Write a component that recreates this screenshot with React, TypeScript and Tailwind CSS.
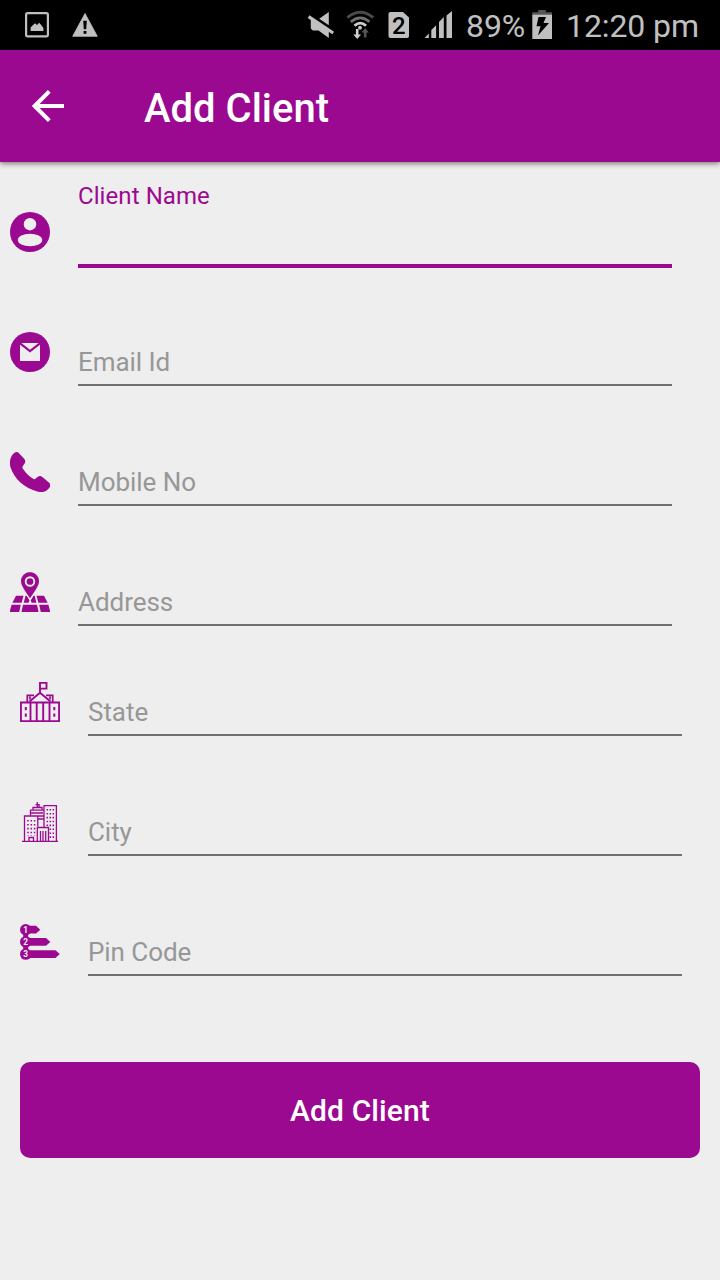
import type { ReactNode } from 'react';

const P = '#9c0991';

function StatusBar() {
  return (
    <div className="flex h-[50px] shrink-0 bg-black text-[#c0c0c0]">
      <svg className="ml-[25px] h-[50px] w-[24px]" viewBox="25 0 24 50" fill="none">
        <rect x="26.1" y="13.1" width="21.8" height="23.3" rx="1.6" stroke="currentColor" strokeWidth="2.2" />
        <path d="M30.600 31v-3.600l2.400-2.400 2-1.800 2 1.800 2.200-2.200 2 2.200 2.200 3v3z" fill="currentColor" />
      </svg>
      <svg className="ml-[23px] h-[50px] w-[26px]" viewBox="72 0 26 50">
        <path d="M85 13.500 97.300 36.300h-24.600z" fill="currentColor" stroke="currentColor" strokeWidth=".8" strokeLinejoin="round" />
        <path d="M83.200 20.800h3.600l-.6 8.400h-2.400zM83.600 31h2.800v2.800h-2.800z" fill="#000" />
      </svg>
      <svg className="ml-[209px] h-[50px] w-[28px]" viewBox="307 0 28 50" fill="currentColor">
        <path d="M319.200 18.700 328.800 12v13.200zM310.800 18l18 12.500V38l-10.300-7.500h-5.700l-2-2z" />
        <path d="M308.600 16.700 333.200 33" stroke="currentColor" strokeWidth="3.200" />
      </svg>
      <svg className="ml-[11px] h-[50px] w-[28px]" viewBox="346 0 28 50" fill="none">
        <path d="M347.300 17.600Q360.500 6.900 373.200 17.600" stroke="#4a4a4a" strokeWidth="3" />
        <path d="M350.800 21.800Q360.200 14 369.500 21.800" stroke="#707070" strokeWidth="2.800" />
        <path d="M354.500 25.700Q360.200 20.500 366 25.700" stroke="#d0d0d0" strokeWidth="2.800" />
        <circle cx="360" cy="27.800" r="2" fill="#c0c0c0" />
        <path d="M355.900 29h2.600v5.500h2.600l-3.900 4.500-3.900-4.500h2.600z" fill="#d0d0d0" />
        <path d="M363.900 37.500h2.600v-5h2.400l-3.700-4.500-3.700 4.500h2.400z" fill="#555" />
      </svg>
      <svg className="ml-[14px] h-[50px] w-[22px]" viewBox="388 0 22 50">
        <path d="M390.500 12h12.500l6 5.500V36q0 2-2 2h-16.500q-2 0-2-2V14q0-2 2-2z" fill="currentColor" />
        <text x="398.700" y="33.500" textAnchor="middle" fontFamily="Roboto, sans-serif" fontWeight="500" fontSize="24" fill="#000">2</text>
      </svg>
      <svg className="ml-[14px] h-[50px] w-[29px]" viewBox="424 0 29 50" fill="currentColor">
        <path d="M424.500 38l4.300-4.500V38zM431.300 38v-8l4.800-4.800V38zM439 38V22l4.800-5V38zM446.500 38V15.500L452 11v27z" />
      </svg>
      <span className="ml-[13px] w-[60px] whitespace-nowrap text-[32px] leading-[52px] tracking-[-0.1px]">89%</span>
      <svg className="ml-[6px] h-[50px] w-[21px]" viewBox="532 0 21 50">
        <path d="M532.300 14.500V12.300h5.900V10h7.600v2.300h6.200v2.200z" fill="#555" />
        <path d="M532.300 14.500H552V39h-19.700z" fill="currentColor" />
        <path d="M538.500 17h7.500l-2.500 6h5.500L538 35.500l2.500-9.300h-4z" fill="#000" />
      </svg>
      <span className="ml-[13px] whitespace-nowrap text-[32px] leading-[52px] tracking-[-0.1px]">12:20 pm</span>
    </div>
  );
}

function PersonIcon() {
  return (
    <>
      <circle cx="20" cy="20" r="20" fill={P} />
      <circle cx="20" cy="12.200" r="6.200" fill="#eee" />
      <ellipse cx="20" cy="28" rx="12.200" ry="6.200" fill="#eee" />
    </>
  );
}

function MailIcon() {
  return (
    <>
      <circle cx="20" cy="20" r="20" fill={P} />
      <path d="M11.400 11h17.200L20 17.700zM10 12.700l10 7.900 10-7.900V29H10z" fill="#eee" />
    </>
  );
}

function PhoneIcon() {
  return (
    <path
      fill={P}
      d="M4.500.7Q7-.8 9 1.200l5.400 5.800q1.700 2.400 0 4.700l-1.500 2.300q-1 1.400 0 2.800 4.300 6.600 10.600 10.200 1.400.5 2.500-.7l1.600-1.300q2.200-1.700 4.700-.1l6.900 5.900q2.200 2.400.3 4.800-4.400 6.200-12.200 3.900Q6.500 33.500.3 14.800-1.300 5 4.500.7z"
    />
  );
}

function MapIcon() {
  return (
    <>
      <path fill={P} d="M6 23.700H13.500l-1.900 7H2.400zM15.600 23.700h1.200l2.700 4.800-1 2.200h-4.800zM26.500 23.700h7.500l3.600 7h-9.200zM23.500 23.700h1.200l1.700 7h-4.800L20.700 28.500zM1.600 32.800h9.200L9.200 40H-.4zM13 32.800h14l1.500 7.200h-17zM29.200 32.800h9.200L40.300 40H30.800z" />
      <path fill={P} stroke="#eee" strokeWidth="1.200" d="M20-.6a9.700 9.700 0 0 1 9.600 9.900c0 6-5 10.600-9.600 18-4.600-7.400-9.600-12-9.600-18A9.700 9.700 0 0 1 20-.6z" />
      <circle cx="20" cy="9.500" r="4.300" fill={P} stroke="#eee" strokeWidth="1.900" />
    </>
  );
}

function CapitolIcon() {
  return (
    <g fill="none" stroke={P} strokeWidth="1.900">
      <path d="M20 10V.9h6.500v5.700H20M9.500 19.500 20 10.800l10.500 8.700" />
      <path d="M14 13.300H7.300v6.700M26 13.300h6.700v6.700M10 14.500v3M30 14.500v3" strokeWidth="1.700" />
      <path d="M.9 20.500h38.200v18.600H.9zM10.500 20.500v18.600M16.700 20.500v18.600M23.200 20.500v18.600M29.500 20.500v18.600" />
      <path d="M5.800 25v3.300M5.800 31.500v3.300M34.300 25v3.300M34.300 31.500v3.300" strokeWidth="2" />
    </g>
  );
}

function CityIcon() {
  return (
    <g fill="none" stroke={P} strokeWidth="1.300">
      <path d="M2 39.500h36M4.500 39.500V14h13.300v10.500M17.300 39.500v-14h11.200v14M24 13V3.600h12.400v35.900M10.500 14V8.200H24v17M13 8V5.500h9V8M17.300 5.500V0M15.500 2.700h3.600v2.800M11 11h12M18 14h5.500M18 17h5.500" />
      <path d="M9 39.500v-4h4.500v4M20.500 29v10M23 29v10M25.700 29v10" />
      <path strokeDasharray="1.600 2.300" d="M8 18v16M11.300 18v16M14.600 18v16M27.300 7v17M30.300 7v31M33.300 7v31" strokeWidth="1.500" />
    </g>
  );
}

function PinCodeIcon() {
  const rows = [
    { y: 7.700, end: 16 },
    { y: 19.900, end: 26 },
    { y: 32.100, end: 35.500 },
  ];
  return (
    <>
      <path d="M5.700 7v25" stroke={P} strokeWidth="5" />
      {rows.map(({ y, end }, i) => (
        <g key={y}>
          <path fill={P} d={`M7 ${y - 3.900}H${end}L${end + 4.300} ${y}L${end} ${y + 3.900}H7z`} />
          <circle cx="5.700" cy={y} r="5.700" fill={P} />
          <text x="5.600" y={y + 3} textAnchor="middle" fontFamily="Roboto, sans-serif" fontWeight="700" fontSize="8.300" fill="#eee">
            {i + 1}
          </text>
        </g>
      ))}
    </>
  );
}

function Field({ icon, label, className = 'h-[120px] pl-[10px]', active = false }: { icon: ReactNode; label: string; className?: string; active?: boolean }) {
  return (
    <div className={`flex shrink-0 items-start ${className}`}>
      <svg className="mt-[40px] h-[40px] w-[40px] shrink-0" viewBox="0 0 40 40">{icon}</svg>
      {active ? (
        <div className="ml-[28px] h-[96px] w-[594px] border-b-4 border-[#9c0991] pt-[8px] text-[24px] leading-[32px] tracking-[0.08px] text-[#9c0991]">{label}</div>
      ) : (
        <div className="ml-[28px] flex h-[94px] w-[594px] items-end border-b-2 border-[#707070] pb-[6px] text-[26px] leading-[32px] tracking-[-0.05px] text-[#979797]">{label}</div>
      )}
    </div>
  );
}

export default function App() {
  return (
    <div className="flex h-[1280px] w-[720px] flex-col overflow-hidden bg-[#eeeeee] font-['Roboto',sans-serif]">
      <StatusBar />
      <header className="flex h-[112px] shrink-0 items-center bg-[#9c0991] text-white shadow-[0_2px_5px_rgba(0,0,0,0.45)]">
        <svg className="ml-[32px] h-[32px] w-[32px]" viewBox="0 0 32 32" fill="none" stroke="currentColor" strokeWidth="4">
          <path d="M32 16H3M17.300 1.400 2.700 16l14.600 14.600" />
        </svg>
        <h1 className="ml-[80px] pt-[6px] text-[40px] font-medium leading-[48px]">Add Client</h1>
      </header>
      <form className="flex flex-col pt-[10px]">
        <Field icon={<PersonIcon />} label="Client Name" active />
        <Field icon={<MailIcon />} label="Email Id" />
        <Field icon={<PhoneIcon />} label="Mobile No" />
        <Field icon={<MapIcon />} label="Address" className="h-[110px] pl-[10px]" />
        <Field icon={<CapitolIcon />} label="State" className="h-[120px] pl-[20px]" />
        <Field icon={<CityIcon />} label="City" className="h-[120px] pl-[20px]" />
        <Field icon={<PinCodeIcon />} label="Pin Code" className="h-[120px] pl-[20px]" />
        <button type="button" className="mx-[20px] mt-[60px] h-[96px] rounded-[10px] bg-[#9c0991] text-[30px] font-medium tracking-[0.1px] text-white">Add Client</button>
      </form>
    </div>
  );
}
